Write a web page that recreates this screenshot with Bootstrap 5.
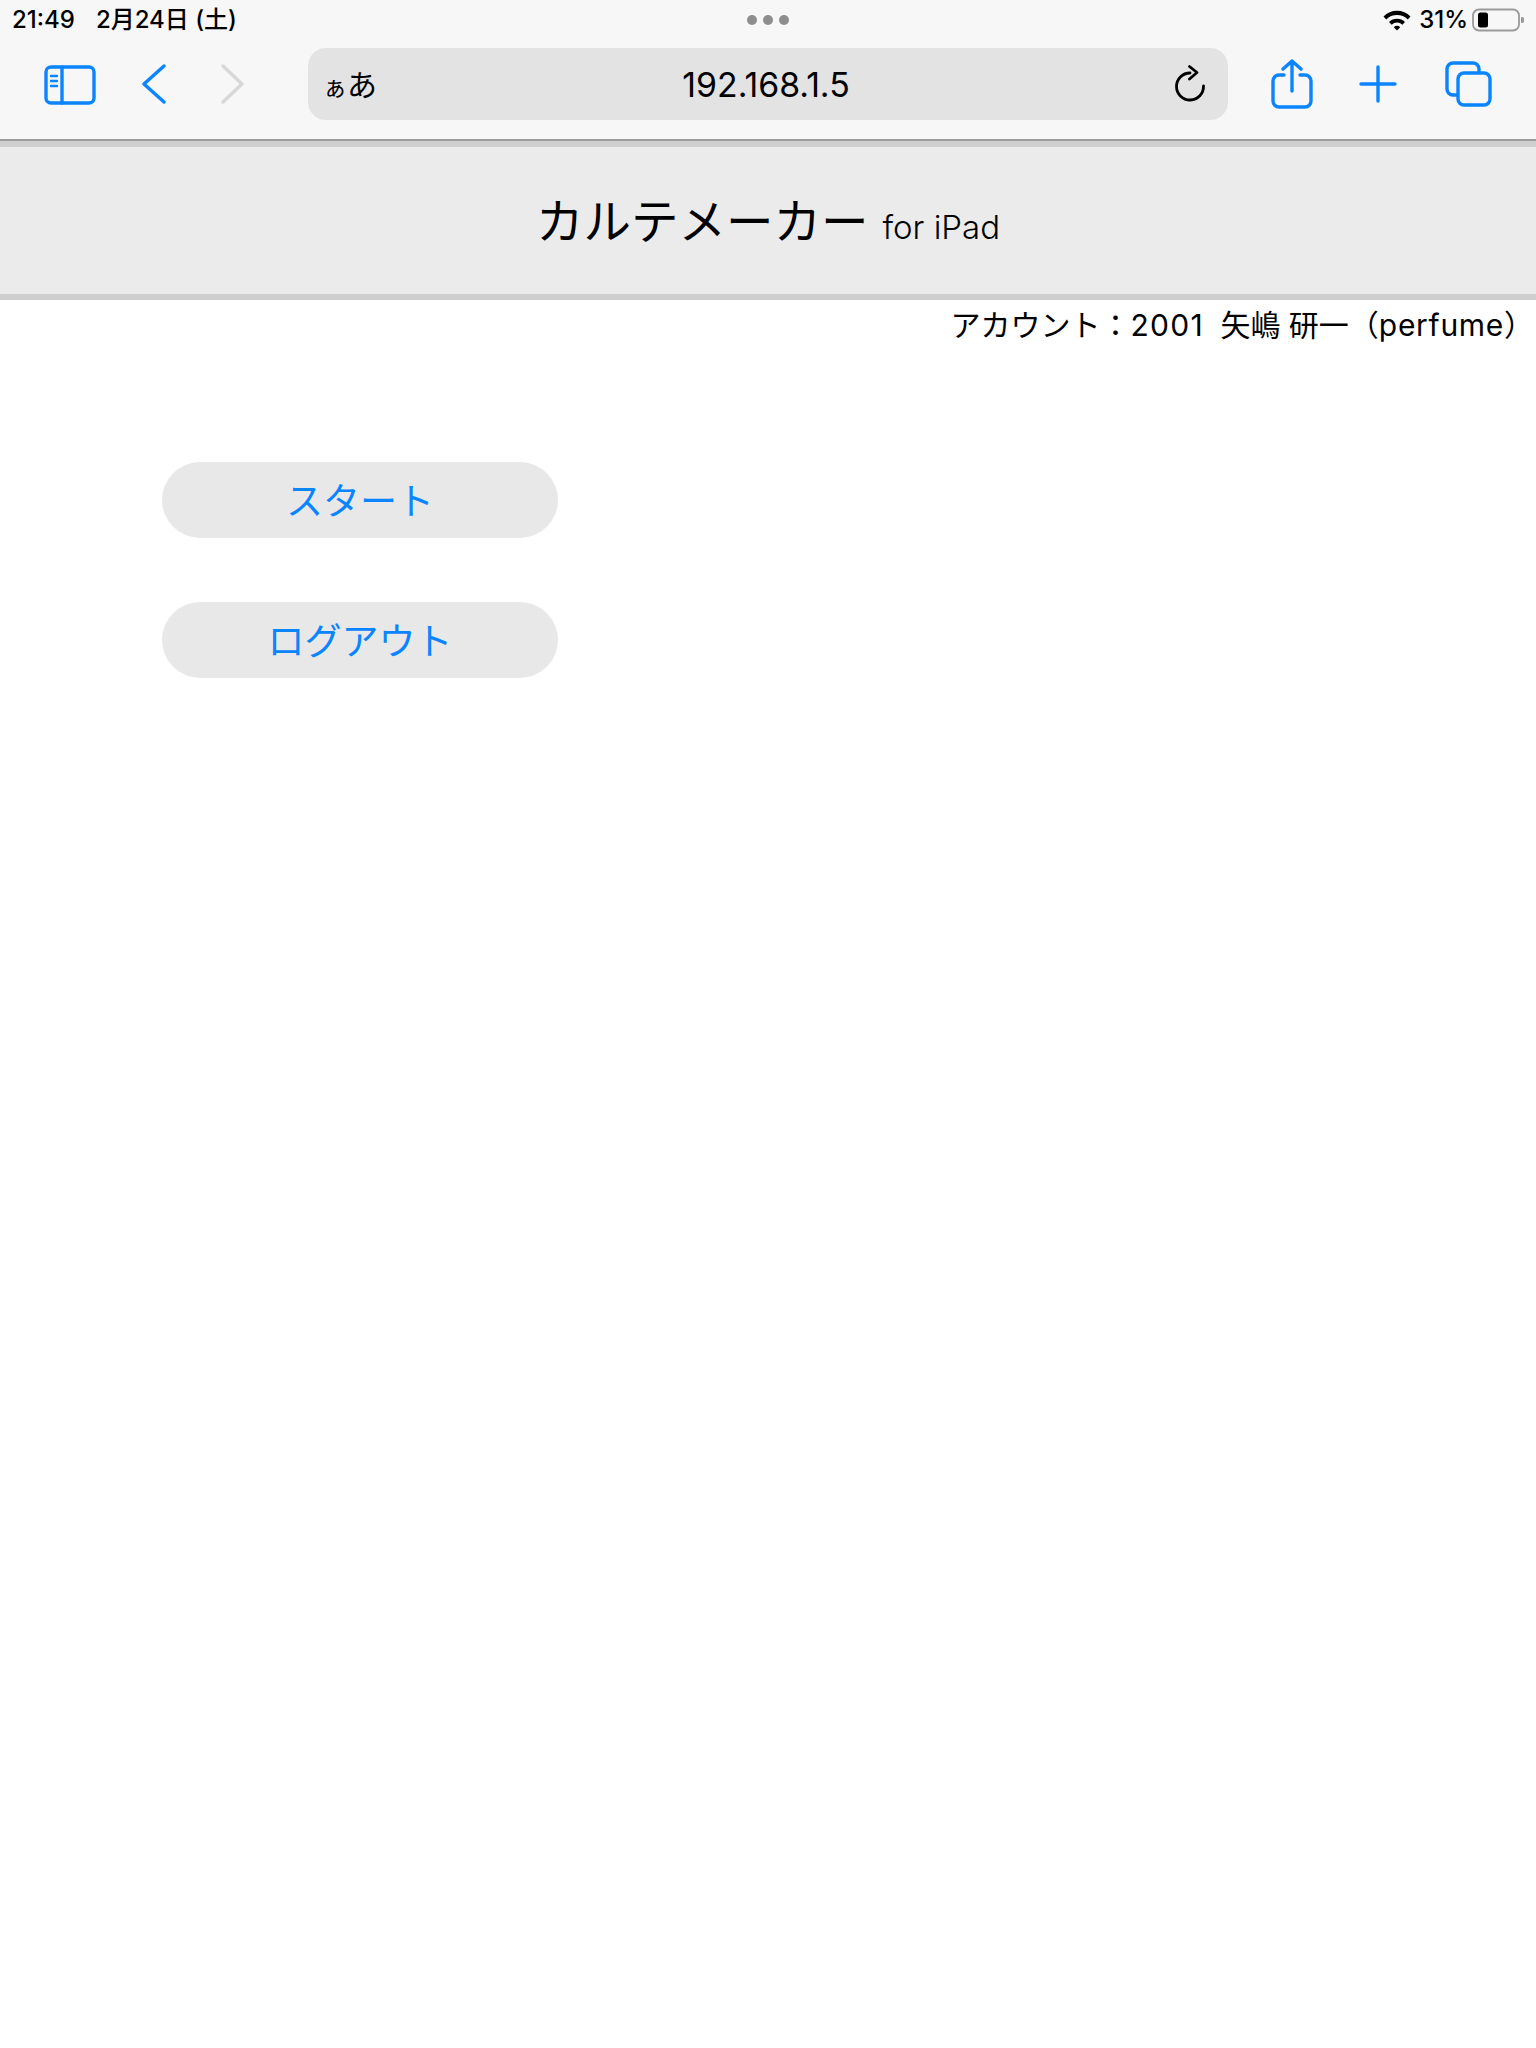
<!doctype html>
<html lang="ja">
<head>
<meta charset="utf-8">
<title>カルテメーカー</title>
<link href="https://cdn.jsdelivr.net/npm/bootstrap@5.3.0/dist/css/bootstrap.min.css" rel="stylesheet">
<style>
html,body{background:#fff;}
body{font-family:Inter,"Noto Sans CJK JP",sans-serif;font-weight:400;color:#000;min-height:2048px;}
.safari-chrome{background:#f7f7f7;height:141px;border-bottom:2px solid #9b9b9b;}
.status-row{height:40px;padding:0 12px 0 12px;font-weight:500;font-size:24px;line-height:1;}
.status-date{margin-left:21px;}
.status-dots{gap:6px;}
.status-dots i{display:block;width:10px;height:10px;border-radius:50%;background:#8e8e8e;}
.status-side{flex:1 1 0;}
.batt{margin-left:4px;}
.tool-row{height:99px;padding-top:8px;}
.tool-left,.tool-right{width:308px;height:72px;}
.tool-left{padding-left:44px;}
.tool-right{padding-left:43px;}
.addr{width:920px;height:72px;background:#e3e3e3;border-radius:18px;padding:0 21px 0 15px;}
.addr-side{flex:1 1 0;}
.addr-aa{font-size:30px;line-height:1;padding-top:1px;}
.addr-aa small{font-size:24px;}
.addr-url{font-size:33.800px;line-height:1;padding:2px 0 0 2px;}
.ico{display:block;fill:none;stroke:#0a84ff;stroke-width:3.400;stroke-linecap:round;stroke-linejoin:round;}
.ico-side{margin-top:17px;}
.ico-back{margin:16px 0 0 46px;}
.ico-fwd{margin:16px 0 0 54px;stroke:#d8d8d8;}
.ico-share{margin-top:11px;}
.ico-plus{margin:17px 0 0 46px;}
.ico-tabs{margin:13px 0 0 48px;}
.app-head{background:#ebebeb;height:159px;border-top:6px solid #cfcfcf;border-bottom:6px solid #cfcfcf;font-size:47.500px;line-height:1;padding-top:2px;}
.app-head span{font-size:33px;margin-left:14px;padding-top:12px;font-weight:300;}
.account{font-size:30px;line-height:50px;padding-right:2px;height:50px;}
.acct-id{letter-spacing:1.300px;margin-right:8px;}
.acct-login{letter-spacing:.7px;}
.menu-wrap{padding:112px 0 0 162px;gap:64px;}
.pill{display:block;width:396px;height:76px;line-height:79px;padding:0;border:0;border-radius:38px;background:#e8e8e8;color:#0a84ff;font-size:37px;font-weight:400;}
.pill:hover,.pill:active{background:#e8e8e8!important;color:#0a84ff!important;}
</style>
</head>
<body>
<div class="safari-chrome">
  <div class="status-row d-flex align-items-center">
    <div class="status-side d-flex"><span>21:49</span><span class="status-date">2月24日 (土)</span></div>
    <div class="status-dots d-flex"><i></i><i></i><i></i></div>
    <div class="status-side d-flex justify-content-end align-items-center">
      <svg width="28" height="22" viewBox="0 0 28 22" class="me-2"><path d="M.500 7.500 A19 19 0 0 1 27.500 7.500 L24.800 10.500 A15 15 0 0 0 3.200 10.500Z M6 13 A11.500 11.500 0 0 1 22 13 L19.300 15.800 A7.500 7.500 0 0 0 8.700 15.800Z M10.800 18.200 A4.500 4.500 0 0 1 17.200 18.200 L14 21.500Z" fill="#000"/></svg>
      <span>31%</span>
      <svg width="52" height="24" viewBox="0 0 52 24" class="batt"><rect x="1" y="1.500" width="46" height="21" rx="6" fill="none" stroke="#9a9a9a" stroke-width="1.800"/><rect x="6" y="4.500" width="10" height="15" rx="2.500" fill="#000"/><path d="M49 9 a4 3 0 0 1 0 6z" fill="#9a9a9a"/></svg>
    </div>
  </div>
  <div class="tool-row d-flex">
    <div class="tool-left d-flex align-items-start flex-shrink-0">
      <svg class="ico ico-side" width="52" height="40" viewBox="0 0 52 40"><rect x="2" y="2" width="48" height="36" rx="5"/><path d="M18 2V38"/><path d="M7 11H13M7 16H13M7 21H13" stroke-width="2.400"/></svg>
      <svg class="ico ico-back" width="25" height="40" viewBox="0 0 25 40"><path d="M22 2 2 20 22 38"/></svg>
      <svg class="ico ico-fwd" width="25" height="40" viewBox="0 0 25 40"><path d="M2 2 21 20 2 38"/></svg>
    </div>
    <div class="addr d-flex align-items-center flex-shrink-0">
      <span class="addr-side addr-aa"><small>ぁ</small>あ</span>
      <span class="addr-url">192.168.1.5</span>
      <span class="addr-side d-flex justify-content-end">
        <svg width="32" height="38" viewBox="0 0 32 38" fill="none" stroke="#000" stroke-width="2.800" stroke-linecap="round" stroke-linejoin="round"><path d="M15 8A13.500 13.500 0 1 0 28.500 21"/><path d="M14.500 1.500 22 7.500 14.500 14"/></svg>
      </span>
    </div>
    <div class="tool-right d-flex align-items-start flex-shrink-0">
      <svg class="ico ico-share" width="42" height="50" viewBox="0 0 42 50"><path d="M13 16H8a6 6 0 0 0-6 6V42a6 6 0 0 0 6 6H34a6 6 0 0 0 6-6V22a6 6 0 0 0-6-6H29"/><path d="M21 32V2M12 10 21 2 30 10"/></svg>
      <svg class="ico ico-plus" width="38" height="38" viewBox="0 0 38 38"><path d="M19 2V36M2 19H36"/></svg>
      <svg class="ico ico-tabs" width="48" height="46" viewBox="0 0 48 46"><path d="M34 10V8a6 6 0 0 0-6-6H8A6 6 0 0 0 2 8V28a6 6 0 0 0 6 6H12"/><rect x="13" y="12" width="32" height="32" rx="6"/></svg>
    </div>
  </div>
</div>
<header class="app-head d-flex align-items-center justify-content-center">カルテメーカー<span>for iPad</span></header>
<div class="account text-end">アカウント：<span class="acct-id">2001</span> 矢嶋 研一（<span class="acct-login">perfume</span>）</div>
<div class="menu-wrap d-flex flex-column align-items-start">
  <a class="btn pill text-center" href="#">スタート</a>
  <a class="btn pill text-center" href="#">ログアウト</a>
</div>
<script src="https://cdn.jsdelivr.net/npm/bootstrap@5.3.0/dist/js/bootstrap.bundle.min.js"></script>
</body>
</html>
